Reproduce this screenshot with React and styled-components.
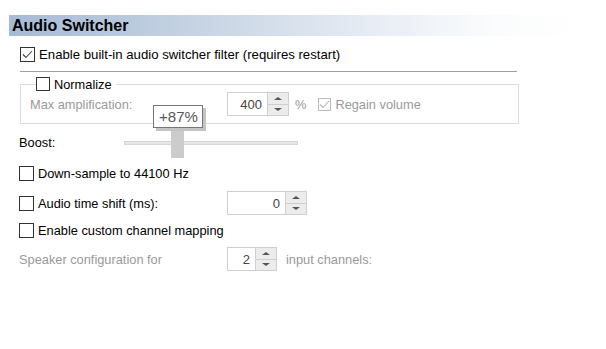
import React from 'react';
import styled, { createGlobalStyle } from 'styled-components';

const Global = createGlobalStyle`
  html, body { margin:0; padding:0; background:#fff; }
  body { font-family:"Liberation Sans", Arial, sans-serif; font-size:12.8px; color:#000; }
`;

const Page = styled.div`
  width:606px;
  height:349px;
  overflow:hidden;
  padding-top:15px;
  box-sizing:border-box;
`;

const Header = styled.div`
  margin-left:9px;
  width:575px;
  height:21px;
  display:flex;
  align-items:center;
  padding-left:3px;
  box-sizing:border-box;
  background:linear-gradient(to right, #a5bad4 0%, #c3d1e2 30%, #e9eef5 65%, #fbfcfd 85%, #fff 100%);
  font-size:16px;
  font-weight:bold;
`;

const Body = styled.div`
  display:flex;
  flex-direction:column;
`;

const Row = styled.div`
  display:flex;
  align-items:center;
  height:${p => p.$h}px;
  margin-top:${p => p.$mt || 0}px;
  padding-left:${p => p.$pl || 0}px;
  font-size:${p => p.$fs ? p.$fs + 'px' : 'inherit'};
  position:relative;
`;

const Box = styled.span`
  width:${p => p.$size || 13}px;
  height:${p => p.$size || 13}px;
  border:1px solid ${p => p.$disabled ? '#bcbcbc' : '#333'};
  background:#fff;
  box-sizing:border-box;
  display:inline-flex;
  align-items:center;
  justify-content:center;
  margin-right:4px;
  flex-shrink:0;
`;

const Label = styled.span`
  display:inline-block;
  color:${p => p.$disabled ? '#9a9a9a' : '#000'};
  white-space:nowrap;
  width:${p => p.$w ? p.$w + 'px' : 'auto'};
`;

const Check = ({ checked, disabled, size, width, children }) => (
  <>
    <Box $size={size} $disabled={disabled}>
      {checked && (
        <svg width="11" height="9" viewBox="0 0 11 9">
          <path d="M1 4.5 L4 7.5 L10 1" fill="none" stroke={disabled ? '#b8b8b8' : '#444'} strokeWidth="1.1" />
        </svg>
      )}
    </Box>
    <Label $disabled={disabled} $w={width}>{children}</Label>
  </>
);

const Separator = styled.div`
  margin:9px 0 0 20px;
  width:497px;
  height:1px;
  background:#a0a0a0;
`;

const Group = styled.div`
  margin:12px 0 0 20px;
  width:499px;
  height:40px;
  box-sizing:border-box;
  border:1px solid #dcdcdc;
  padding:0 0 0 9px;
  display:flex;
  align-items:center;
  position:relative;
`;

const Legend = styled.div`
  position:absolute;
  top:-8px;
  left:15px;
  height:14px;
  display:flex;
  align-items:center;
  padding-right:4px;
  background:#fff;
`;

const Spin = styled.div`
  display:flex;
  width:${p => p.$w}px;
  height:24px;
  border:1px solid #cfcfcf;
  box-sizing:border-box;
  background:#fff;
  flex-shrink:0;
`;

const SpinValue = styled.div`
  flex:1;
  display:flex;
  align-items:center;
  justify-content:flex-end;
  padding-right:5px;
  color:#444;
  font-size:13px;
`;

const SpinButtons = styled.div`
  width:20px;
  display:flex;
  flex-direction:column;
  border-left:1px solid #cfcfcf;
`;

const SpinBtn = styled.div`
  flex:1;
  background:#ececec;
  display:flex;
  align-items:center;
  justify-content:center;
  border-top:${p => p.$down ? '1px solid #cfcfcf' : 'none'};
  &::after {
    content:'';
    border-left:4px solid transparent;
    border-right:4px solid transparent;
    ${p => p.$down ? 'border-top:3px solid #555;' : 'border-bottom:3px solid #555;'}
  }
`;

const SpinBox = ({ value, w }) => (
  <Spin $w={w}>
    <SpinValue>{value}</SpinValue>
    <SpinButtons>
      <SpinBtn />
      <SpinBtn $down />
    </SpinButtons>
  </Spin>
);

const Unit = styled.span`
  color:#999;
  margin-left:${p => p.$ml || 0}px;
  margin-right:${p => p.$mr || 0}px;
  display:inline-flex;
  align-items:center;
  white-space:nowrap;
`;

const Track = styled.div`
  position:relative;
  width:174px;
  height:4px;
  background:#e7e7e7;
  border:1px solid #d6d6d6;
  box-sizing:border-box;
`;

const Thumb = styled.div`
  position:absolute;
  top:-13px;
  width:13px;
  height:29px;
  background:#cccccc;
`;

const Tip = styled.div`
  position:absolute;
  bottom:calc(100% + 1px);
  left:-18px;
  width:50px;
  height:23px;
  box-sizing:border-box;
  border:1px solid #767676;
  background:#fff;
  box-shadow:3px 3px 0 #c4c4c4;
  color:#575757;
  font-size:15px;
  display:flex;
  align-items:center;
  justify-content:center;
`;

export default function App() {
  const boost = 27;
  return (
    <Page>
      <Global />
      <Header>Audio Switcher</Header>
      <Body>
        <Row $h={15} $mt={11} $pl={20} $fs={13.2}>
          <Check checked size={15}>Enable built-in audio switcher filter (requires restart)</Check>
        </Row>
        <Separator />
        <Group>
          <Legend><Check size={14}>Normalize</Check></Legend>
          <Label $disabled $w={197}>Max amplification:</Label>
          <SpinBox value="400" w={62} />
          <Unit $ml={6} $mr={12}>%</Unit>
          <Check checked disabled>Regain volume</Check>
        </Group>
        <Row $h={29} $mt={4} $pl={19}>
          <Label $w={105}>Boost:</Label>
          <Track>
            <Thumb style={{ left: `${boost}%` }}>
              <Tip>+87%</Tip>
            </Thumb>
          </Track>
        </Row>
        <Row $h={15} $mt={9} $pl={19}>
          <Check size={15}>Down-sample to 44100 Hz</Check>
        </Row>
        <Row $h={24} $mt={10} $pl={19}>
          <Check size={15} width={189}>Audio time shift (ms):</Check>
          <SpinBox value="0" w={80} />
        </Row>
        <Row $h={15} $mt={8} $pl={19}>
          <Check size={15}>Enable custom channel mapping</Check>
        </Row>
        <Row $h={26} $mt={8} $pl={19}>
          <Label $disabled $w={208}>Speaker configuration for</Label>
          <SpinBox value="2" w={50} />
          <Unit $ml={9}>input channels:</Unit>
        </Row>
      </Body>
    </Page>
  );
}
